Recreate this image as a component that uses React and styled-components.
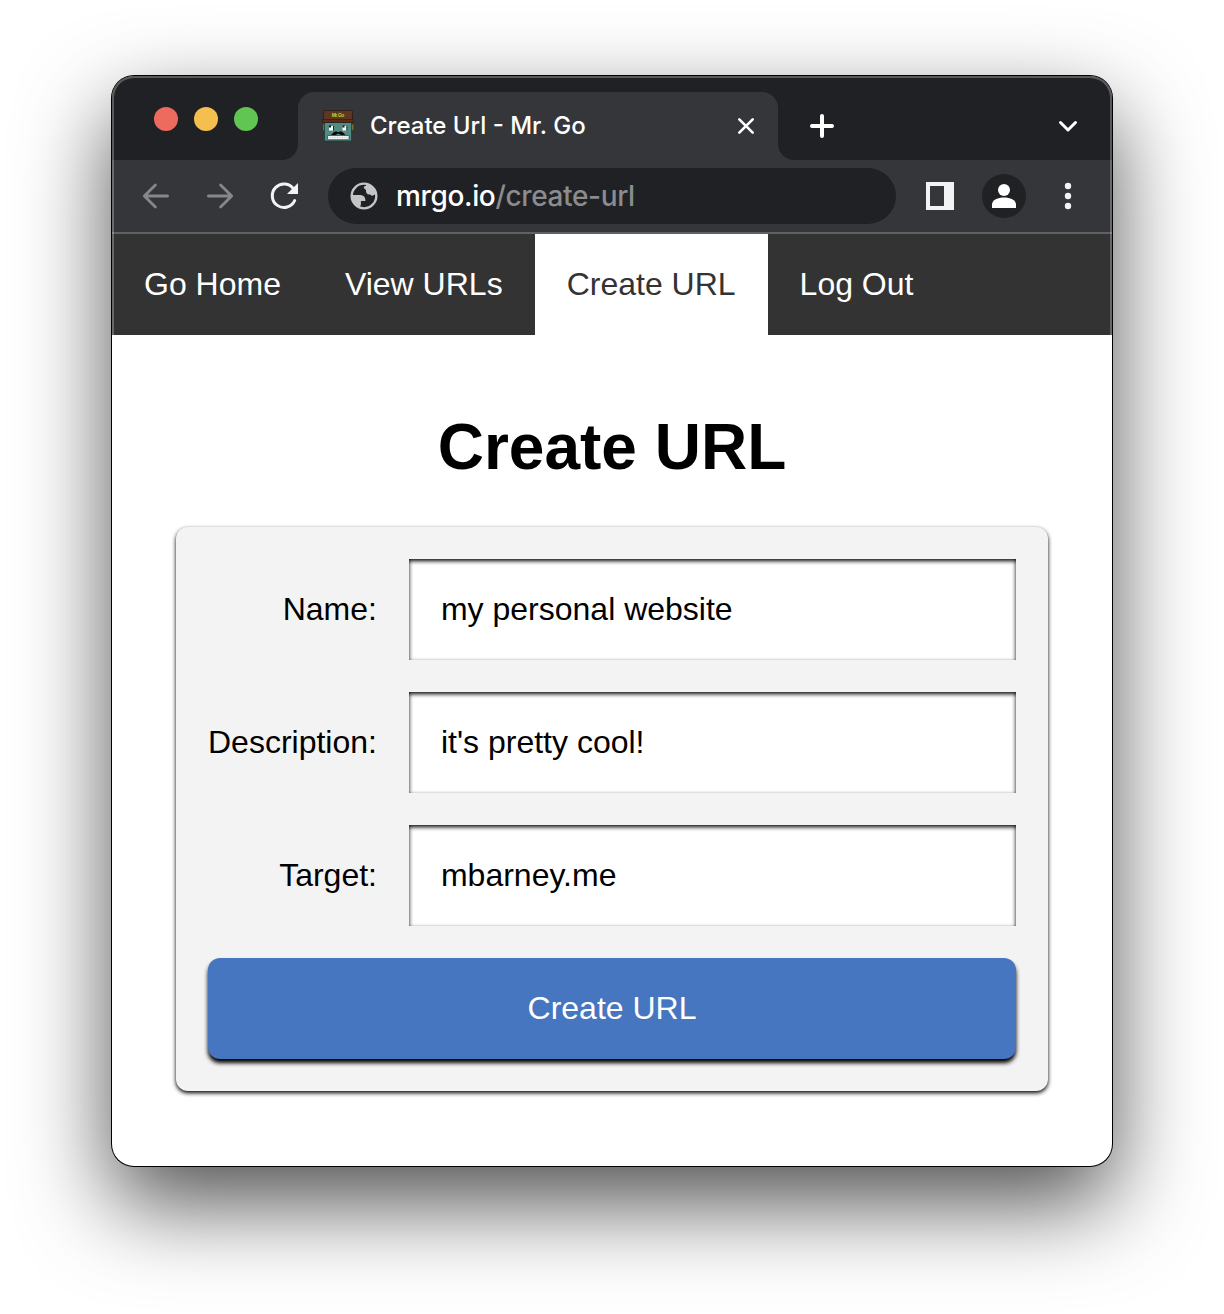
import React from "react";
import styled, { createGlobalStyle } from "styled-components";

const Global = createGlobalStyle`
  *, *::before, *::after { box-sizing: border-box; }
  body { margin: 0; background: #fff; font-family: "Liberation Sans", Arial, sans-serif; }
`;

const Desktop = styled.div`
  height: 1314px;
  padding: 76px 112px 148px;
  overflow: hidden;
`;

const Window = styled.div`
  position: relative;
  height: 1090px;
  display: flex;
  flex-direction: column;
  border-radius: 22px;
  background: #fff;
  box-shadow: 0 0 0 1px #000, 0 37px 90px rgba(0, 0, 0, 0.69);
`;

const Chrome = styled.header`
  height: 158px;
  border-radius: 22px 22px 0 0;
  background: #35363a;
  border-bottom: 2px solid #606164;
  overflow: hidden;
`;

const ChromeEdge = styled.div`
  position: absolute;
  inset: 0 0 auto 0;
  height: 259px;
  border-radius: 22px 22px 0 0;
  border: 2px solid rgba(255, 255, 255, 0.26);
  border-bottom: 0;
  pointer-events: none;
`;

const TabStrip = styled.div`
  height: 84px;
  padding: 16px 32px 0 42px;
  display: flex;
  background: #202124;
`;

const Lights = styled.div`
  display: flex;
  gap: 16px;
  width: 144px;
  padding-top: 15px;
`;

const Light = styled.span`
  width: 24px;
  height: 24px;
  border-radius: 50%;
  background: ${(p) => p.$color};
`;

const Tab = styled.div`
  position: relative;
  width: 480px;
  height: 68px;
  padding: 0 22px 0 23px;
  display: flex;
  align-items: center;
  border-radius: 16px 16px 0 0;
  background: #35363a;
  &::before, &::after {
    content: "";
    position: absolute;
    bottom: 0;
    width: 16px;
    height: 16px;
  }
  &::before { left: -16px; background: radial-gradient(circle at 0 0, #202124 15.5px, #35363a 16.5px); }
  &::after { right: -16px; background: radial-gradient(circle at 100% 0, #202124 15.5px, #35363a 16.5px); }
`;

const TabTitle = styled.span`
  flex: 1;
  margin-left: 15px;
  font: 450 24px/32px Inter, sans-serif;
  color: #fff;
`;

const StripButton = styled.span`
  display: flex;
  height: 68px;
  align-items: center;
  margin-left: ${(p) => p.$start || "0"};
`;

const Toolbar = styled.div`
  height: 72px;
  padding: 0 12px 0 28px;
  display: flex;
  align-items: center;
`;

const Tool = styled.span`
  display: flex;
  flex: none;
  justify-content: center;
  width: ${(p) => p.$width}px;
`;

const Address = styled.div`
  flex: none;
  width: 568px;
  height: 56px;
  margin-right: 12px;
  padding-left: 22px;
  display: flex;
  align-items: center;
  gap: 18px;
  border-radius: 28px;
  background: #202124;
  font: 450 28px/36px Inter, sans-serif;
  letter-spacing: -0.35px;
  color: #fff;
`;

const Path = styled.span`
  color: #8b8c8f;
`;

const Avatar = styled.span`
  display: flex;
  width: 44px;
  height: 44px;
  border-radius: 50%;
  background: #202124;
`;

const Nav = styled.nav`
  height: 101px;
  display: flex;
  background: #333;
`;

const NavLink = styled.a`
  padding: 32px;
  font-size: 32px;
  line-height: 37px;
  white-space: nowrap;
  color: ${(p) => (p.$active ? "#333" : "#fff")};
  background: ${(p) => (p.$active ? "#fff" : "transparent")};
`;

const Main = styled.main`
  padding: 75px 64px 0;
`;

const Title = styled.h1`
  margin: 0 0 43px;
  font-size: 64px;
  line-height: 74px;
  text-align: center;
  color: #000;
`;

const Form = styled.form`
  display: grid;
  grid-template-columns: auto 1fr;
  gap: 32px;
  padding: 32px;
  border-radius: 12px;
  background: #f3f3f3;
  box-shadow: 0 2px 4px #000;
`;

const Label = styled.label`
  align-self: center;
  text-align: right;
  font-size: 32px;
  line-height: 37px;
  color: #000;
`;

const Input = styled.input`
  width: 100%;
  min-width: 0;
  height: 101px;
  padding: 0 32px;
  border: 0;
  border-radius: 0;
  outline: 0;
  background: #fff;
  box-shadow: inset 0 2px 4px #000;
  font: 32px/37px "Liberation Sans", Arial, sans-serif;
  color: #000;
`;

const Submit = styled.button`
  grid-column: 1 / -1;
  height: 101px;
  padding: 0;
  border: 0;
  border-radius: 12px;
  background: #4676c0;
  box-shadow: 0 4px 4px #000;
  font: 32px/37px "Liberation Sans", Arial, sans-serif;
  color: #fff;
`;

const Favicon = () => (
  <svg width="34" height="34" viewBox="0 0 34 34">
    <rect x="2" y="15.500" width="2.500" height="5.500" fill="#77701f" />
    <rect x="30" y="15.500" width="2.500" height="5.500" fill="#77701f" />
    <rect x="3.500" y="13.500" width="27" height="18.500" rx="1" fill="#4f8c84" stroke="#1c3d3a" strokeWidth="0.800" />
    <rect x="2.500" y="1.500" width="29" height="10" rx="1" fill="#5f3622" stroke="#2b1a14" strokeWidth="0.800" />
    <rect x="1.500" y="10.500" width="31" height="3" fill="#5a2c17" stroke="#2b1a14" strokeWidth="0.600" />
    <text x="17" y="7.800" textAnchor="middle" fontSize="5" fontWeight="700" textLength="12.500" fontFamily="Liberation Sans, sans-serif" fill="#b4dc2c">Mr. Go</text>
    <path d="M8 17h4v4.500H8zM21.500 17h4v4.500h-4z" fill="#fff" />
    <path d="M8 16.500h2v2H8zM21.500 16.500h2v2h-2zM12 17h.8v4.500H12zM25.500 17h.8v4.500h-.8z" fill="#111" />
    <path d="M10 25.200c2 0 2.500-2.700 5-2.700 1 0 1.700.3 2.300.8.600-.5 1.300-.8 2.300-.8 2.500 0 3 2.700 5 2.700-2.500 1.500-5.500.8-7.300-.7-1.800 1.500-4.800 2.200-7.300.7z" fill="#080808" />
    <rect x="6.500" y="26.500" width="21.500" height="4.200" rx=".5" fill="#f8f8f8" stroke="#222" strokeWidth="0.600" />
    <path d="M7 28.500h20.500M9 27v3M11.500 27v3M14 27v3M16.500 27v3M19 27v3M21.500 27v3M24 27v3M26 27v3" stroke="#c4c4c4" strokeWidth="0.400" />
  </svg>
);

const fields = [
  ["Name:", "name", "my personal website"],
  ["Description:", "description", "it's pretty cool!"],
  ["Target:", "target", "mbarney.me"],
];

export default function App() {
  return (
    <Desktop>
      <Global />
      <Window>
        <Chrome>
          <TabStrip>
            <Lights>
              <Light $color="#ed6a5e" />
              <Light $color="#f5bf4f" />
              <Light $color="#61c554" />
            </Lights>
            <Tab>
              <Favicon />
              <TabTitle>Create Url - Mr. Go</TabTitle>
              <svg width="20" height="20" viewBox="0 0 20 20" stroke="#fff" strokeWidth="2.6" strokeLinecap="round">
                <path d="M3.3 3.3 16.7 16.7M16.7 3.3 3.3 16.7" />
              </svg>
            </Tab>
            <StripButton $start="32px">
              <svg width="24" height="24" viewBox="0 0 24 24" stroke="#fff" strokeWidth="4" strokeLinecap="round">
                <path d="M12 2v20M2 12h20" />
              </svg>
            </StripButton>
            <StripButton $start="auto">
              <svg width="24" height="24" viewBox="0 0 24 24" fill="none" stroke="#fff" strokeWidth="3" strokeLinecap="round" strokeLinejoin="round">
                <path d="M4.500 8.500 12 16l7.500-7.500" />
              </svg>
            </StripButton>
          </TabStrip>
          <Toolbar>
            <Tool $width={32}>
              <svg width="32" height="32" viewBox="0 0 32 32" fill="none" stroke="#86878a" strokeWidth="2.800" strokeLinecap="round" strokeLinejoin="round">
                <path d="M27.600 16H4.500M15.400 4.900 4.300 16l11.100 11.100" />
              </svg>
            </Tool>
            <Tool $width={96}>
              <svg width="32" height="32" viewBox="0 0 32 32" fill="none" stroke="#86878a" strokeWidth="2.800" strokeLinecap="round" strokeLinejoin="round">
                <path d="M4.400 16h23.100M16.600 4.900 27.700 16 16.600 27.100" />
              </svg>
            </Tool>
            <Tool $width={32}>
              <svg width="32" height="32" viewBox="0 0 32 32" fill="none">
                <path d="M25.700 9.200A11.700 11.700 0 1 0 26.700 20.500" stroke="#f1f3f4" strokeWidth="3" strokeLinecap="round" />
                <path d="M30 3v11H19z" fill="#f1f3f4" />
              </svg>
            </Tool>
            <Tool $width={28} />
            <Address>
              <svg width="28" height="28" viewBox="2 2 20 20" fill="#c4c5c7">
                <circle cx="12" cy="12" r="8.800" fill="none" stroke="#c4c5c7" strokeWidth="1.700" />
                <path d="M3 11.300h5.500c3.200 0 4.700 1.500 4.500 4.300H9.800v2.700L8.800 20A8.800 8.800 0 0 1 3 11.300zM13.500 3v1.600c-1 0-1.600.6-1.600 1.400s.6 1.300 1.500 1.500c-.2 2 .7 3.500 2.400 3.500.8 0 1 .4 1.600.8.900.3 2-.8 3.600-1.500C20 6.500 17.500 3.700 13.500 3z" />
              </svg>
              <span>mrgo.io<Path>/create-url</Path></span>
            </Address>
            <Tool $width={64}>
              <svg width="28" height="28" viewBox="0 0 28 28">
                <path d="M0 0h28v28H0zM4 4v20h14V4z" fill="#f1f3f4" fillRule="evenodd" />
              </svg>
            </Tool>
            <Tool $width={64}>
              <Avatar>
                <svg width="44" height="44" viewBox="0 0 44 44" fill="#fff">
                  <circle cx="22" cy="16" r="6" />
                  <path d="M10 34v-3.500c0-4.500 6-7 12-7s12 2.500 12 7V34z" />
                </svg>
              </Avatar>
            </Tool>
            <Tool $width={64}>
              <svg width="8" height="28" viewBox="0 0 8 28" fill="#f1f3f4">
                <circle cx="4" cy="4" r="3.200" /><circle cx="4" cy="14" r="3.200" /><circle cx="4" cy="24" r="3.200" />
              </svg>
            </Tool>
          </Toolbar>
        </Chrome>
        <Nav>
          <NavLink>Go Home</NavLink>
          <NavLink>View URLs</NavLink>
          <NavLink $active>Create URL</NavLink>
          <NavLink>Log Out</NavLink>
        </Nav>
        <Main>
          <Title>Create URL</Title>
          <Form>
            {fields.map(([label, id, value]) => (
              <React.Fragment key={id}>
                <Label htmlFor={id}>{label}</Label>
                <Input id={id} defaultValue={value} />
              </React.Fragment>
            ))}
            <Submit type="button">Create URL</Submit>
          </Form>
        </Main>
        <ChromeEdge />
      </Window>
    </Desktop>
  );
}
